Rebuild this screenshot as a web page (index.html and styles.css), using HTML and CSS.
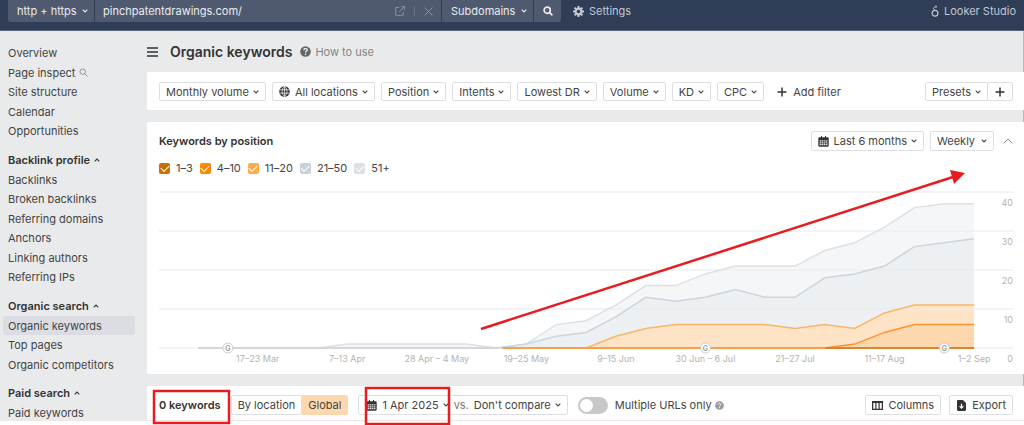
FILE: index.html
```
<!DOCTYPE html>
<html lang="en">
<head>
<meta charset="utf-8">
<meta name="viewport" content="width=device-width, initial-scale=1">
<title>Organic keywords</title>
<link rel="stylesheet" href="styles.css">
</head>
<body>
<svg class="sprite" aria-hidden="true">
  <symbol id="chev" viewBox="0 0 6 4"><path d="M.7.7 3 3 5.3.7" fill="none" stroke="currentColor" stroke-width="1.1"/></symbol>
  <symbol id="plus" viewBox="0 0 10 10"><path d="M5 .5v9M.5 5h9" stroke="currentColor" stroke-width="1.5"/></symbol>
  <symbol id="help" viewBox="0 0 11 11"><circle cx="5.5" cy="5.5" r="5.3" fill="currentColor"/><path d="M3.8 4.3c0-2.3 3.4-2.2 3.4-.1 0 1.1-1.7 1.2-1.7 2.3" fill="none" stroke="#fff" stroke-width="1.2"/><circle cx="5.5" cy="8.2" r=".8" fill="#fff"/></symbol>
  <symbol id="cal" viewBox="0 0 11 11"><path d="M1.5 1.2H3V0h1v1.2h3V0h1v1.2h1.500c.7 0 1.200.5 1.200 1.200v7.200c0 .7-.5 1.200-1.200 1.200h-8C.8 10.800.3 10.300.3 9.600V2.400c0-.7.5-1.200 1.200-1.200z" fill="currentColor"/><path d="M1.600 4.300h1.700v1.300H1.600zm2.100 0h1.500v1.300H3.700zm2 0h1.500v1.300H5.700zm2 0h1.700v1.300H7.700zM1.600 6.200h1.700v1.200H1.600zm2.100 0h1.500v1.200H3.700zm2 0h1.500v1.200H5.700zm2 0h1.700v1.200H7.700zM1.600 8h1.700v1.200H1.600zm2.100 0h1.500v1.200H3.700zm2 0h1.500v1.200H5.700zm2 0h1.700v1.200H7.700z" fill="#fff" opacity=".85"/></symbol>
  <symbol id="mag" viewBox="0 0 10 10"><circle cx="4.100" cy="4.100" r="3" fill="none" stroke="currentColor"/><path d="m6.300 6.300 3 3" stroke="currentColor"/></symbol>
</svg>

<header class="topbar">
  <form class="search">
    <label class="picker picker-top protocol"><select aria-label="Protocol"><option>http + https</option></select><svg class="chev"><use href="#chev"/></svg></label>
    <div class="url">
      <input type="text" aria-label="Target" value="pinchpatentdrawings.com/">
      <button type="button" aria-label="Open site"><svg width="10" height="10" viewBox="0 0 10 10" fill="none" stroke="currentColor"><path d="M4 1.500H.7v7.800h7.600V6M6 .6h3.400V4M9.300.700 4.200 5.800"/></svg></button>
      <span class="rule"></span>
      <button type="button" aria-label="Clear"><svg width="9" height="9" viewBox="0 0 9 9" stroke="currentColor"><path d="m.6.600 7.800 7.800M8.400.600.600 8.400"/></svg></button>
    </div>
    <label class="picker picker-top mode"><select aria-label="Mode"><option>Subdomains</option></select><svg class="chev"><use href="#chev"/></svg></label>
    <button class="go" type="submit" aria-label="Search"><svg width="10" height="10" viewBox="0 0 10 10" fill="none" stroke="currentColor" stroke-width="1.700"><circle cx="4.200" cy="4.200" r="3.100"/><path d="m6.400 6.400 3 3"/></svg></button>
  </form>
  <button class="settings" type="button"><svg width="11" height="11" viewBox="0 0 11 11"><circle cx="5.500" cy="5.500" r="2.900" fill="none" stroke="currentColor" stroke-width="2.200"/><path d="M5.500 0v2M5.500 9v2M0 5.500h2M9 5.500h2M1.600 1.600 3 3M8 8l1.400 1.400M9.400 1.600 8 3M3 8 1.600 9.400" stroke="currentColor" stroke-width="2"/></svg>Settings</button>
  <a class="looker" href="#"><svg width="8" height="12" viewBox="0 0 8 12" fill="none" stroke="currentColor"><circle cx="4" cy="8.200" r="2.900" stroke-width="1.200"/><path d="M4 5.300 2.600 3.900c-.5-.8.200-1.600 1-1.500" /><circle cx="4.900" cy="1.600" r=".7"/></svg>Looker Studio</a>
</header>

<div class="layout">
  <nav class="side">
    <ul>
      <li><a href="#">Overview</a></li>
      <li><a href="#">Page inspect <svg class="mag"><use href="#mag"/></svg></a></li>
      <li><a href="#">Site structure</a></li>
      <li><a href="#">Calendar</a></li>
      <li><a href="#">Opportunities</a></li>
    </ul>
    <ul>
      <li><button type="button">Backlink profile <svg class="chev up"><use href="#chev"/></svg></button></li>
      <li><a href="#">Backlinks</a></li>
      <li><a href="#">Broken backlinks</a></li>
      <li><a href="#">Referring domains</a></li>
      <li><a href="#">Anchors</a></li>
      <li><a href="#">Linking authors</a></li>
      <li><a href="#">Referring IPs</a></li>
    </ul>
    <ul>
      <li><button type="button">Organic search <svg class="chev up"><use href="#chev"/></svg></button></li>
      <li><a class="current" href="#">Organic keywords</a></li>
      <li><a href="#">Top pages</a></li>
      <li><a href="#">Organic competitors</a></li>
    </ul>
    <ul>
      <li><button type="button">Paid search <svg class="chev up"><use href="#chev"/></svg></button></li>
      <li><a href="#">Paid keywords</a></li>
    </ul>
  </nav>

  <main>
    <div class="heading">
      <button class="burger" type="button" aria-label="Menu"><svg width="11" height="10" viewBox="0 0 11 10" stroke="currentColor" stroke-width="1.500"><path d="M0 1h11M0 5h11M0 9h11"/></svg></button>
      <h1>Organic keywords</h1>
      <a class="how" href="#"><svg class="ico"><use href="#help"/></svg>How to use</a>
    </div>

    <section class="panel row filters">
      <button class="btn" type="button">Monthly volume<svg class="chev"><use href="#chev"/></svg></button>
      <button class="btn" type="button"><svg class="ico" viewBox="0 0 11 11"><circle cx="5.500" cy="5.500" r="5.300" fill="#333"/><path d="M.5 3.800h10M.5 7.200h10M5.500.300v10.400M5.500.500c-3.300 2.800-3.300 7.200 0 10M5.500.500c3.300 2.800 3.300 7.200 0 10" fill="none" stroke="#fff" stroke-width=".7"/></svg>All locations<svg class="chev"><use href="#chev"/></svg></button>
      <button class="btn" type="button">Position<svg class="chev"><use href="#chev"/></svg></button>
      <button class="btn" type="button">Intents<svg class="chev"><use href="#chev"/></svg></button>
      <button class="btn" type="button">Lowest DR<svg class="chev"><use href="#chev"/></svg></button>
      <button class="btn" type="button">Volume<svg class="chev"><use href="#chev"/></svg></button>
      <button class="btn" type="button">KD<svg class="chev"><use href="#chev"/></svg></button>
      <button class="btn" type="button">CPC<svg class="chev"><use href="#chev"/></svg></button>
      <button class="btn bare" type="button"><svg class="plus"><use href="#plus"/></svg>Add filter</button>
      <div class="joined end">
        <button class="btn" type="button">Presets<svg class="chev"><use href="#chev"/></svg></button>
        <button class="btn save" type="button" aria-label="Save preset"><svg class="plus"><use href="#plus"/></svg></button>
      </div>
    </section>

    <section class="panel chart-panel">
      <div class="row">
        <h2>Keywords by position</h2>
        <button class="btn end" type="button"><svg class="ico"><use href="#cal"/></svg>Last 6 months<svg class="chev"><use href="#chev"/></svg></button>
        <label class="picker weekly"><select aria-label="Interval"><option>Weekly</option></select><svg class="chev"><use href="#chev"/></svg></label>
        <button class="collapse" type="button" aria-label="Collapse"><svg width="10" height="6" viewBox="0 0 10 6" fill="none" stroke="currentColor"><path d="M.7 5.300 5 1l4.300 4.300"/></svg></button>
      </div>
      <div class="legend">
        <label><input class="c1" type="checkbox" checked>1–3</label>
        <label><input class="c2" type="checkbox" checked>4–10</label>
        <label><input class="c3" type="checkbox" checked>11–20</label>
        <label><input class="c4" type="checkbox" checked>21–50</label>
        <label><input class="c5" type="checkbox" checked>51+</label>
      </div>
      <svg class="chart" id="chart" viewBox="0 0 854 174" role="img" aria-label="Keywords by position"></svg>
    </section>

    <section class="panel row results">
      <h2>0 keywords</h2>
      <div class="joined scope">
        <button class="btn" type="button">By location</button>
        <button class="btn on" type="button" aria-pressed="true">Global</button>
      </div>
      <div class="compare">
        <button class="date" type="button"><svg class="ico"><use href="#cal"/></svg>1 Apr 2025<svg class="chev"><use href="#chev"/></svg></button>
        <span class="vs">vs.</span>
        <label class="picker plain"><select aria-label="Compare with"><option>Don't compare</option></select><svg class="chev"><use href="#chev"/></svg></label>
      </div>
      <label class="toggle"><input type="checkbox" role="switch">Multiple URLs only</label>
      <svg class="ico faint"><use href="#help"/></svg>
      <button class="btn end columns" type="button"><svg class="ico" viewBox="0 0 11 11"><path d="M0 1h11v9H0z" fill="#333"/><path d="M1.300 3h2v5.800h-2zm3.200 0h2v5.800h-2zm3.200 0h2v5.800h-2z" fill="#fff"/></svg>Columns</button>
      <button class="btn" type="button"><svg class="ico" viewBox="0 0 11 11"><path d="M1 1.200C1 .5 1.500 0 2.200 0H7l3 3v6.800c0 .7-.5 1.200-1.200 1.200H2.200C1.500 11 1 10.500 1 9.800z" fill="#333"/><path d="M5.500 3.800v4M3.600 6.200l1.900 2 1.900-2" fill="none" stroke="#fff" stroke-width="1.200"/></svg>Export</button>
    </section>
  </main>
</div>

<svg class="marks" width="1024" height="425" aria-hidden="true">
  <rect x="154" y="391" width="75" height="32"/>
  <rect x="366" y="388" width="83" height="36"/>
  <path d="M481 329 953 177"/>
  <path class="head" d="m950 170 15 3-11 11z"/>
</svg>
<script src="chart.js"></script>
</body>
</html>
```
FILE: chart.js
```
const svg = document.getElementById('chart');
const BASE = 157, UNIT = 3.9, START = 39, STEP = 29.85;
const x = i => START + STEP * i;
const y = v => BASE - UNIT * v;

function add(tag, attrs, text) {
  const el = document.createElementNS('http://www.w3.org/2000/svg', tag);
  for (const key in attrs) el.setAttribute(key, attrs[key]);
  if (text !== undefined) el.textContent = text;
  svg.appendChild(el);
}

const series = [
  ['s5', [0,0,0,0,0,1,1,1,1,1,0,1,6,7,11,16,16,19,21,21,21,25,27,31,36,37,37]],
  ['s4', [0,0,0,0,0,0,0,0,0,0,0,1,3,4,8,13,12,13,15,13,13,18,19,21,26,27,28]],
  ['s3', [0,0,0,0,0,0,0,0,0,0,0,0,0,0,3,5,6,6,6,6,5,6,5,9,11,11,11]],
  ['s2', [0,0,0,0,0,0,0,0,0,0,0,0,0,0,0,0,0,0,0,0,0,0,1,4,6,6,6]]
];

series.forEach(([name, values]) => {
  const points = values.map((v, i) => x(i) + ',' + y(v)).join(' ');
  add('polygon', { class: 'area ' + name, points: x(0) + ',' + BASE + ' ' + points + ' ' + x(26) + ',' + BASE });
});
[0, 10, 20, 30, 40].forEach(v => add('line', { class: 'grid', x1: 0, x2: 854, y1: y(v), y2: y(v) }));
series.forEach(([name, values]) => {
  const first = Math.max(0, values.findIndex(v => v > 0) - 1);
  const points = values.map((v, i) => x(i) + ',' + y(v)).slice(first).join(' ');
  add('polyline', { class: 'line ' + name, points });
});
[['b5', 0, 10], ['b3', 10.2, 21], ['s1', 21, 26]].forEach(([name, from, to]) =>
  add('line', { class: 'base ' + name, x1: x(from), x2: x(to), y1: BASE, y2: BASE }));

['17–23 Mar', '7–13 Apr', '28 Apr – 4 May', '19–25 May', '9–15 Jun', '30 Jun – 6 Jul', '21–27 Jul', '11–17 Aug', '1–2 Sep']
  .forEach((label, i) => add('text', { x: x(2 + 3 * i), y: BASE + 14, 'text-anchor': 'middle' }, label));
[0, 10, 20, 30, 40].forEach(v => add('text', { x: 854, y: y(v) + 14, 'text-anchor': 'end' }, v));
[1, 17, 25].forEach(i => {
  add('circle', { class: 'event', cx: x(i), cy: BASE, r: 5 });
  add('text', { class: 'g', x: x(i), y: BASE + 3, 'text-anchor': 'middle' }, 'G');
});
```
FILE: styles.css
```
* { box-sizing: border-box; }
body { margin: 0; background: #fff; color: #444; font: 11px/16px Inter, "Liberation Sans", sans-serif; }
button, input, select { font: inherit; color: inherit; margin: 0; padding: 0; border: 0; background: none; }
a { color: inherit; text-decoration: none; }
h1, h2, ul { margin: 0; padding: 0; }
ul { list-style: none; }
svg { flex: none; }
.sprite { position: absolute; width: 0; height: 0; }
.chev { width: 6px; height: 4px; }
.up { transform: rotate(180deg); }
.ico { width: 11px; height: 11px; }
.plus { width: 10px; height: 10px; }
.end { margin-left: auto; }

.topbar { display: flex; align-items: flex-start; height: 31px; padding: 0 8px; background: #2f3d57; color: #c3c8d1; border-bottom: 1px solid #5b6679; }
.search { display: flex; gap: 1px; color: #e9ebef; }
.search > * { height: 22px; background: #4f5a70; }
.picker { position: relative; display: flex; }
.picker select { appearance: none; outline: 0; }
.picker .chev { position: absolute; right: 8px; top: 50%; margin-top: -2px; pointer-events: none; }
.protocol { width: 86px; border-radius: 0 0 0 3px; }
.picker-top select { width: 100%; padding-left: 9px; }
.picker-top .chev { right: 6px; }
.url { display: flex; align-items: center; gap: 9px; width: 346px; padding: 0 8px; }
.url input { flex: 1; min-width: 0; height: 22px; }
.url button { display: flex; color: #8992a2; }
.rule { width: 1px; height: 10px; background: #697387; }
.mode { width: 91px; }
.go { width: 27px; display: grid; place-items: center; border-radius: 0 0 3px 0; }
.settings, .looker { display: flex; align-items: center; height: 22px; gap: 5px; }
.settings { margin-left: 12px; }
.looker { margin-left: auto; }

.layout { display: flex; background: #e9eaec; border-bottom: 1px solid #f3e4e6; }
.side { flex: none; width: 147px; padding: 12px 12px 0 3px; margin-bottom: -2px; display: flex; flex-direction: column; gap: 9px; }
.side li { display: flex; height: 20px; }
.side li:nth-child(even) { height: 19px; }
.side a, .side button { flex: 1; display: flex; align-items: center; gap: 4px; padding-left: 5px; border-radius: 2px; }
.side button { font-weight: 600; color: #333; }
.side .mag { width: 9px; height: 9px; color: #888; }
.side .current { background: #dcdde3; }

main { flex: 1; min-width: 0; display: flex; flex-direction: column; gap: 12px; box-shadow: inset -1px 0 #b9babd; }
.heading { display: flex; align-items: center; height: 41px; margin-bottom: -12px; color: #333; }
.burger { display: flex; }
h1 { margin-left: 12px; font-size: 14px; font-weight: 600; }
.how { display: flex; align-items: center; gap: 4px; margin-left: 8px; color: #858585; }
.how .ico { color: #666; }
.panel { background: #fff; padding: 10px 11px 9px 12px; }
.chart-panel, .results { padding-top: 9px; }
.row { display: flex; align-items: center; gap: 6px; }
.btn { display: flex; align-items: center; height: 19px; padding: 0 6px; gap: 4px; border: 1px solid #dddfe2; border-radius: 2px; background: #fff; white-space: nowrap; }
.btn .ico, .date .ico { margin-right: 1px; color: #333; }
.bare { border-color: transparent; gap: 6px; }
.plus { color: #333; }
.joined { display: flex; }
.joined .btn + .btn { margin-left: -1px; }
.save { padding: 0 7px; }

h2 { font-size: 11px; font-weight: 600; line-height: 16px; color: #333; white-space: nowrap; }
.weekly { height: 20px; border: 1px solid #dddfe2; border-radius: 2px; }
.chart-panel .btn { height: 20px; }
.weekly select { padding: 0 17px 0 6px; }
.weekly .chev { right: 6px; }
.collapse { display: flex; margin-left: 3px; color: #888; }
.legend { display: flex; gap: 7px; padding-top: 9px; }
.legend label { display: flex; align-items: center; gap: 6px; }
.legend input { appearance: none; width: 11px; height: 11px; border-radius: 2px; display: grid; place-items: center; }
.legend input:checked::before { content: ""; width: 7px; height: 4px; margin-bottom: 2px; border: solid #fff; border-width: 0 0 1px 1px; transform: rotate(-45deg); }
.c1 { background: #cc7000; }
.c2 { background: #ff8800; }
.c3 { background: #ffaa44; }
.c4 { background: #c8d1d9; }
.c5 { background: #dce1e6; }

.chart { display: block; width: 100%; margin-top: 15px; overflow: visible; }
.chart text { font-size: 9px; fill: #b3b3b3; }
.chart .g { font-size: 7px; font-weight: 600; fill: #999; }
.grid { stroke: #e8eaec; stroke-opacity: .7; stroke-width: 1.5; }
.line { fill: none; stroke-width: 1.5; }
.area.s5 { fill: #f4f6f8; }
.area.s4 { fill: #ecf0f3; }
.area.s3 { fill: #fee3c7; }
.area.s2 { fill: #fdd8af; }
.line.s5 { stroke: #dce1e6; }
.line.s4 { stroke: #ccd4dc; }
.line.s3 { stroke: #fbb566; }
.line.s2 { stroke: #fd942b; }
.base { stroke-width: 2; }
.b5 { stroke: #d5d5da; }
.b3 { stroke: #f7a04a; }
.s1 { stroke: #d98432; }
.event { fill: #fff; stroke: #ccc; }

.results { gap: 10px; padding-bottom: 5px; }
.results .btn { height: 20px; }
.results .on { background: #fdd8ae; border-color: #fdd8ae; }
.compare { display: flex; align-items: center; height: 20px; padding: 0 6px 0 7px; border: 1px solid #dddfe2; border-radius: 2px; white-space: nowrap; }
.date { display: flex; align-items: center; gap: 4px; }
.vs { margin: 0 5px; color: #777; }
.plain select { padding: 0 10px 0 0; }
.plain .chev { right: 0; }
.toggle { display: flex; align-items: center; gap: 7px; white-space: nowrap; }
.toggle input { appearance: none; width: 30px; height: 17px; padding: 2px; border-radius: 9px; background: #c8c8c8; }
.toggle input::before { content: ""; display: block; width: 13px; height: 13px; border-radius: 50%; background: #fff; }
.faint { margin-left: -7px; width: 9px; height: 9px; color: #999; }
.columns { margin-right: -2px; }
.marks { position: absolute; left: 0; top: 0; pointer-events: none; fill: none; stroke: #e81c20; stroke-width: 2.5; }
.marks .head { fill: #e81c20; stroke: none; }
```
